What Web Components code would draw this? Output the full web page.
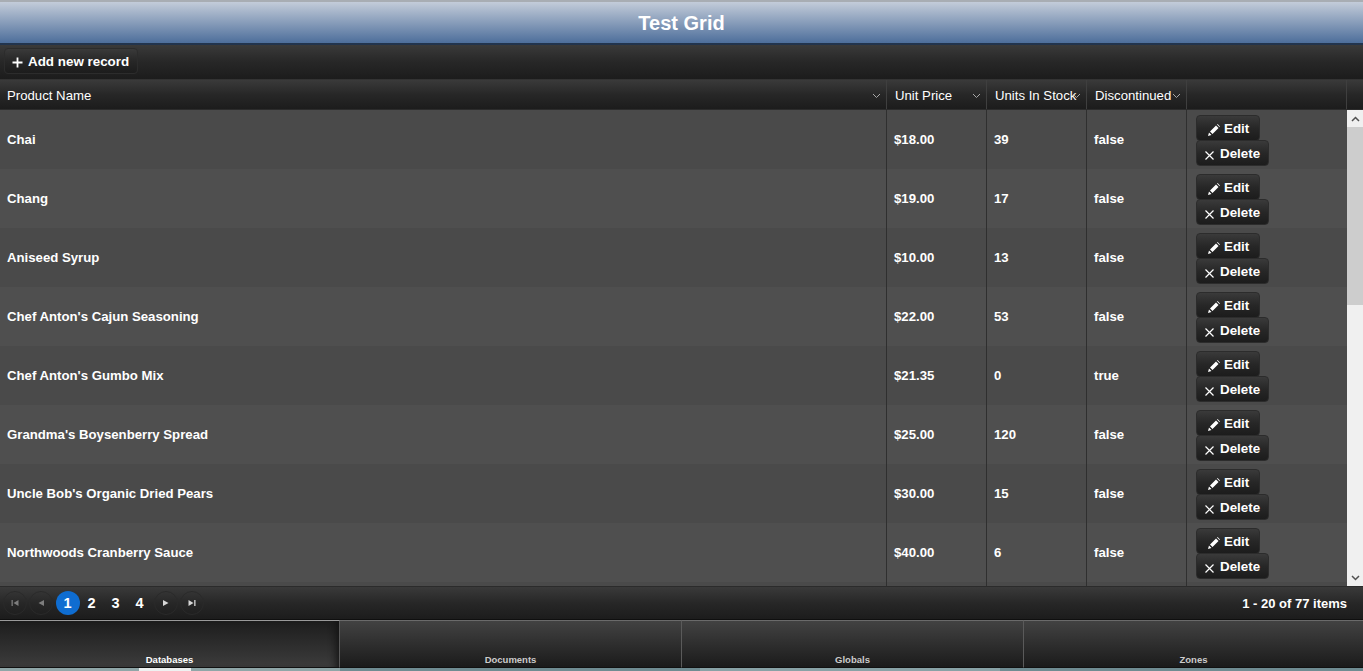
<!DOCTYPE html>
<html>
<head>
<meta charset="utf-8">
<title>Test Grid</title>
<style>
  html, body { margin: 0; height: 100%; overflow: hidden; background: #3d3d3d; }
  body { font-family: "Liberation Sans", Arial, sans-serif; display: flex; flex-direction: column; height: 671px; }
</style>
</head>
<body>
<title-bar>Test Grid</title-bar>
<grid-toolbar></grid-toolbar>
<product-grid></product-grid>
<grid-pager></grid-pager>
<tab-strip></tab-strip>

<script>
const darkGrad = 'linear-gradient(#3a3a3a, #272727 50%, #1c1c1c)';

class titleBar extends HTMLElement {
  constructor() {
    super();
    this.attachShadow({ mode: 'open' });
    this.shadowRoot.innerHTML = `
      <style>
        :host {
          display: flex;
          flex: none;
          align-items: center;
          justify-content: center;
          height: 45px;
          box-sizing: border-box;
          padding-top: 1px;
          border-top: 2px solid #a8adb3;
          border-bottom: 2px solid #22344d;
          background: linear-gradient(#c3ccd9, #4d6e9b);
          color: #fff;
          font: bold 20px "Liberation Sans", Arial, sans-serif;
        }
      </style>
      <slot></slot>`;
  }
}

class gridToolbar extends HTMLElement {
  constructor() {
    super();
    this.attachShadow({ mode: 'open' });
    this.shadowRoot.innerHTML = `
      <style>
        :host {
          display: flex;
          flex: none;
          align-items: center;
          height: 35px;
          box-sizing: border-box;
          padding: 0 0 2px 4px;
          background: ${darkGrad};
          border-bottom: 1px solid #333;
        }
      </style>
      <grid-button icon="add" style="--pad-r: 8px">Add new record</grid-button>`;
  }
}

class gridButton extends HTMLElement {
  constructor() {
    super();
    const icons = {
      add: '<path d="M5.500 .5v10M.5 5.500h10" stroke="#fff" stroke-width="1.800" fill="none"/>',
      edit: '<path d="M0 12l1-3.500 2.500 2.500zM2 7.500L8 1.500l2.500 2.500-6 6zM9 .5l.6-.5 2.400 2.400-.6.6z" fill="#fff"/>',
      del: '<path d="M1.500 2.500l8 8M9.500 2.500l-8 8" stroke="#fff" stroke-width="1.200" fill="none"/>'
    };
    this.attachShadow({ mode: 'open' });
    this.shadowRoot.innerHTML = `
      <style>
        :host {
          display: inline-flex;
          align-items: center;
          height: 26px;
          box-sizing: border-box;
          padding: 0 var(--pad-r, 9px) 0 var(--pad-l, 7px);
          gap: var(--gap, 4px);
          border: 1px solid #2c2c2c;
          border-radius: 4px;
          background: ${darkGrad};
          color: #fff;
          font: bold 13.400px "Liberation Sans", Arial, sans-serif;
          white-space: nowrap;
        }
        svg { width: 12px; height: 12px; margin-top: 3px; flex: none; }
      </style>
      <svg viewBox="0 0 12 12">${icons[this.getAttribute('icon')]}</svg><slot></slot>`;
  }
}

class gridHeader extends HTMLElement {
  constructor() {
    super();
    this.attachShadow({ mode: 'open' });
    this.shadowRoot.innerHTML = `
      <style>
        :host {
          display: flex;
          align-items: center;
          position: relative;
          box-sizing: border-box;
          padding: 1px 0 0 var(--pad-l, 8px);
          border-right: 1px solid #3f3f3f;
          color: #fff;
          font: 13.200px "Liberation Sans", Arial, sans-serif;
          white-space: nowrap;
        }
        /* the filter arrow sits over the end of the cell */
        svg { position: absolute; right: 5px; top: 13px; width: 9px; height: 6px; }
      </style>
      <slot></slot>
      <svg viewBox="0 0 9 6"><path d="M1 1l3.500 3.500L8 1" stroke="#a8a8a8" fill="none"/></svg>`;
  }
}

class productRow extends HTMLElement {
  constructor() {
    super();
    this.attachShadow({ mode: 'open' });
    this.shadowRoot.innerHTML = `
      <style>
        :host {
          display: grid;
          grid-template-columns: 887px 100px 100px 100px 1fr;
          height: 59px;
          background: var(--row-bg, #4d4d4d);
          color: #fff;
          font: bold 13.200px "Liberation Sans", Arial, sans-serif;
        }
        :host([blank]) .cmd { display: none; }
        div {
          display: flex;
          align-items: center;
          box-sizing: border-box;
          padding: 0 0 1px 7px;
          border-right: 1px solid #2f2f2f;
          white-space: nowrap;
        }
        div:first-child { padding-left: 5px; }
        .cmd {
          flex-direction: column;
          align-items: flex-start;
          justify-content: flex-start;
          padding: 5px 0 0 9px;
          border: 0;
        }
        .edit { --pad-l: 11px; --pad-r: 10px; --gap: 4px; margin-bottom: -1px; }
        .del { --pad-l: 7px; --pad-r: 8px; --gap: 4px; }
      </style>
      <div><slot name="name"></slot></div>
      <div><slot name="price"></slot></div>
      <div><slot name="stock"></slot></div>
      <div><slot name="disc"></slot></div>
      <div class="cmd">
        <grid-button class="edit" icon="edit">Edit</grid-button>
        <grid-button class="del" icon="del">Delete</grid-button>
      </div>`;
  }
  connectedCallback() {
    for (const key of ['name', 'price', 'stock', 'disc']) {
      if (!this.hasAttribute(key)) continue;
      const span = document.createElement('span');
      span.slot = key;
      span.textContent = this.getAttribute(key);
      this.appendChild(span);
    }
  }
}

class productGrid extends HTMLElement {
  constructor() {
    super();
    const rows = [
      ['Chai', '$18.00', '39', 'false'],
      ['Chang', '$19.00', '17', 'false'],
      ['Aniseed Syrup', '$10.00', '13', 'false'],
      ["Chef Anton's Cajun Seasoning", '$22.00', '53', 'false'],
      ["Chef Anton's Gumbo Mix", '$21.35', '0', 'true'],
      ["Grandma's Boysenberry Spread", '$25.00', '120', 'false'],
      ["Uncle Bob's Organic Dried Pears", '$30.00', '15', 'false'],
      ['Northwoods Cranberry Sauce', '$40.00', '6', 'false']
    ];
    const body = rows.map((r, i) =>
      `<product-row style="--row-bg:${i % 2 ? '#4f4f4f' : '#4a4a4a'}"
        name="${r[0]}" price="${r[1]}" stock="${r[2]}" disc="${r[3]}"></product-row>`).join('');
    this.attachShadow({ mode: 'open' });
    this.shadowRoot.innerHTML = `
      <style>
        :host { display: flex; flex-direction: column; flex: 1; min-height: 0; }
        .head {
          display: grid;
          grid-template-columns: 887px 100px 100px 100px 160px 1fr;
          flex: none;
          height: 30px;
          background: ${darkGrad};
          border-bottom: 1px solid #2b2b2b;
          box-sizing: border-box;
        }
        .body { display: flex; flex: 1; min-height: 0; }
        .rows { flex: 1; min-width: 0; overflow: hidden; }
        scroll-rail { flex: none; }
      </style>
      <div class="head">
        <grid-header style="--pad-l:7px">Product Name</grid-header>
        <grid-header>Unit Price</grid-header>
        <grid-header>Units In Stock</grid-header>
        <grid-header>Discontinued</grid-header>
        <div style="border-right:1px solid #3f3f3f"></div>
        <div></div>
      </div>
      <div class="body">
        <div class="rows">${body}<product-row blank style="--row-bg:#4a4a4a"></product-row></div>
        <scroll-rail></scroll-rail>
      </div>`;
  }
}

class scrollRail extends HTMLElement {
  constructor() {
    super();
    this.attachShadow({ mode: 'open' });
    this.shadowRoot.innerHTML = `
      <style>
        :host { display: flex; flex-direction: column; width: 16px; background: #f0f0f0; }
        .btn { height: 17px; display: flex; align-items: center; justify-content: center; }
        .thumb { height: 178px; background: #cdcdcd; }
        .fill { flex: 1; }
        svg { width: 9px; height: 6px; }
      </style>
      <div class="btn"><svg viewBox="0 0 9 6"><path d="M1 5l3.500-3.500L8 5" stroke="#505050" stroke-width="1.500" fill="none"/></svg></div>
      <div class="thumb"></div>
      <div class="fill"></div>
      <div class="btn"><svg viewBox="0 0 9 6"><path d="M1 1l3.500 3.500L8 1" stroke="#505050" stroke-width="1.500" fill="none"/></svg></div>`;
  }
}

class gridPager extends HTMLElement {
  constructor() {
    super();
    const nav = (d, cls) => `<span class="nav ${cls}"><svg viewBox="0 0 10 10"><path d="${d}"/></svg></span>`;
    this.attachShadow({ mode: 'open' });
    this.shadowRoot.innerHTML = `
      <style>
        :host {
          display: flex;
          flex: none;
          align-items: center;
          height: 34px;
          box-sizing: border-box;
          padding: 0 16px 0 2px;
          background: ${darkGrad};
          border-top: 1px solid #2b2b2b;
          border-bottom: 1px solid #0f0f0f;
          color: #fff;
          font: bold 13px "Liberation Sans", Arial, sans-serif;
        }
        .nav, .num {
          display: flex;
          align-items: center;
          justify-content: center;
          box-sizing: border-box;
          width: 24px;
          height: 24px;
          border-radius: 50%;
        }
        .nav { margin: 0 1px; border: 1px solid #2a2a2a; }
        .nav svg { width: 10px; height: 10px; }
        .off svg { fill: #7d7d7d; }
        .act svg { fill: #d6d6d6; }
        .nums { display: flex; margin: 0 1px 0 2px; font-size: 14.500px; }
        .num { padding-right: 1px; }
        .on { background: #0f6dd1; }
        .end { margin-left: auto; }
      </style>
      ${nav('M1.500 2h1.300v6H1.500zM8.500 2v6L3.500 5z', 'off')}
      ${nav('M8 2v6L2.500 5z', 'off')}
      <div class="nums">
        <span class="num on">1</span>
        <span class="num">2</span>
        <span class="num">3</span>
        <span class="num">4</span>
      </div>
      ${nav('M2 2v6l5.500-3z', 'act')}
      ${nav('M1.500 2v6l5-3zM7.200 2h1.300v6H7.200z', 'act')}
      <span class="end">1 - 20 of 77 items</span>`;
  }
}

class tabStrip extends HTMLElement {
  constructor() {
    super();
    const names = ['Databases', 'Documents', 'Globals', 'Zones'];
    this.attachShadow({ mode: 'open' });
    this.shadowRoot.innerHTML = `
      <style>
        :host {
          display: flex;
          flex-direction: column;
          flex: none;
          height: 51px;
          color: #ccc;
          font: bold 9.500px "Liberation Sans", Arial, sans-serif;
        }
        .tabs {
          display: grid;
          grid-template-columns: 340px 342px 342px 1fr;
          height: 48px;
        }
        .tabs div {
          display: flex;
          align-items: flex-end;
          justify-content: center;
          box-sizing: border-box;
          padding-bottom: 2px;
          background: linear-gradient(#424242, #1b1b1b);
          border-top: 1px solid #6a6a6a;
          border-right: 1px solid #5a5a5a;
          border-bottom: 1px solid #111;
        }
        .tabs div:last-child { border-right: 0; }
        .tabs .on {
          background: linear-gradient(#1d1d1d, #3c3c3c);
          border-top-color: #9a9a9a;
          box-shadow: inset -8px 0 8px -6px #111;
          color: #fff;
        }
        /* what shows of the page behind the window */
        .behind {
          flex: 1;
          background: linear-gradient(90deg,
            #8fa6a8 0 139px, #eef1f1 139px 191px, #8fa6a8 191px 340px,
            #6f8c92 340px 700px, #88a2a6 700px 1000px, #6f8c92 1000px);
        }
      </style>
      <div class="tabs">
        ${names.map((n, i) => `<div class="${i ? '' : 'on'}">${n}</div>`).join('')}
      </div>
      <div class="behind"></div>`;
  }
}

customElements.define('title-bar', titleBar);
customElements.define('grid-button', gridButton);
customElements.define('grid-toolbar', gridToolbar);
customElements.define('grid-header', gridHeader);
customElements.define('product-row', productRow);
customElements.define('scroll-rail', scrollRail);
customElements.define('product-grid', productGrid);
customElements.define('grid-pager', gridPager);
customElements.define('tab-strip', tabStrip);
</script>
</body>
</html>
